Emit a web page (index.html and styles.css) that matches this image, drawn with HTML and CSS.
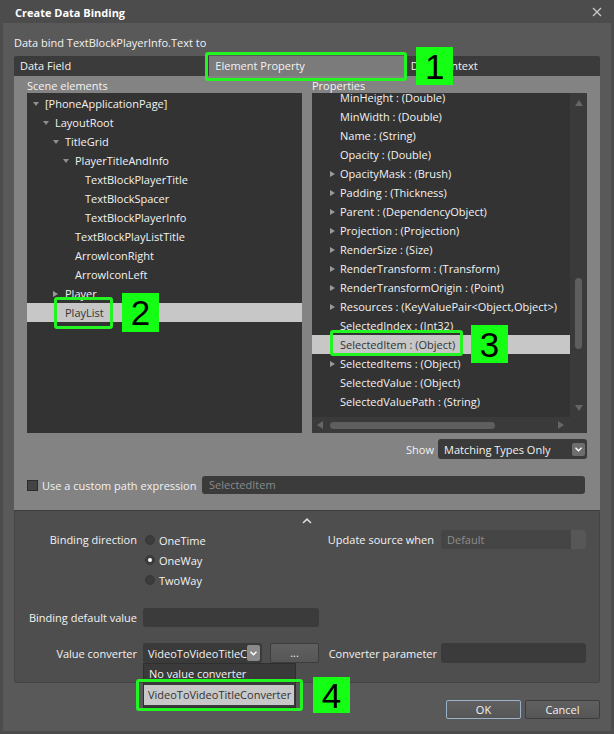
FILE: index.html
```html
<!DOCTYPE html>
<html>
  <head>
    <link rel="stylesheet" href="styles.css">
  </head>
  <body>
    <div class="dialog">
      <div class="titlebar">
        <span class="title">Create Data Binding</span>
        <svg class="close" width="10" height="10" viewBox="0 0 10 10">
          <path d="M1 1 L9 9 M9 1 L1 9" stroke="#c9c9c9" stroke-width="1.3" fill="none" />
        </svg>
      </div>

      <div class="content">
        <div class="prompt">Data bind TextBlockPlayerInfo.Text to</div>

        <div class="tabs">
          <div class="tab">Data Field</div>
          <div class="tab active">
            Element Property
            <span class="mark mark-tab"></span>
            <span class="badge badge-tab">1</span>
          </div>
          <div class="tab">Data Context</div>
        </div>

        <div class="panel">
          <div class="columns">
            <div class="column">
              <div class="col-label">Scene elements</div>
              <div class="tree">
                <div class="row l0"><span class="arrow open"></span>[PhoneApplicationPage]</div>
                <div class="row l1"><span class="arrow open"></span>LayoutRoot</div>
                <div class="row l2"><span class="arrow open"></span>TitleGrid</div>
                <div class="row l3"><span class="arrow open"></span>PlayerTitleAndInfo</div>
                <div class="row l4"><span class="arrow"></span>TextBlockPlayerTitle</div>
                <div class="row l4"><span class="arrow"></span>TextBlockSpacer</div>
                <div class="row l4"><span class="arrow"></span>TextBlockPlayerInfo</div>
                <div class="row l3"><span class="arrow"></span>TextBlockPlayListTitle</div>
                <div class="row l3"><span class="arrow"></span>ArrowIconRight</div>
                <div class="row l3"><span class="arrow"></span>ArrowIconLeft</div>
                <div class="row l2"><span class="arrow closed"></span>Player</div>
                <div class="row l2 selected">
                  <span class="arrow"></span>PlayList
                  <span class="mark mark-tree"></span>
                  <span class="badge badge-tree">2</span>
                </div>
              </div>
            </div>

            <div class="column">
              <div class="col-label">Properties</div>
              <div class="props">
                <div class="props-view">
                  <div class="props-inner">
                    <div class="row prop"><span class="arrow"></span>MinHeight : (Double)</div>
                    <div class="row prop"><span class="arrow"></span>MinWidth : (Double)</div>
                    <div class="row prop"><span class="arrow"></span>Name : (String)</div>
                    <div class="row prop"><span class="arrow"></span>Opacity : (Double)</div>
                    <div class="row prop"><span class="arrow closed"></span>OpacityMask : (Brush)</div>
                    <div class="row prop"><span class="arrow closed"></span>Padding : (Thickness)</div>
                    <div class="row prop"><span class="arrow closed"></span>Parent : (DependencyObject)</div>
                    <div class="row prop"><span class="arrow closed"></span>Projection : (Projection)</div>
                    <div class="row prop"><span class="arrow closed"></span>RenderSize : (Size)</div>
                    <div class="row prop"><span class="arrow closed"></span>RenderTransform : (Transform)</div>
                    <div class="row prop"><span class="arrow closed"></span>RenderTransformOrigin : (Point)</div>
                    <div class="row prop"><span class="arrow closed"></span>Resources : (KeyValuePair&lt;Object,Object&gt;)</div>
                    <div class="row prop"><span class="arrow"></span>SelectedIndex : (Int32)</div>
                    <div class="row prop selected">
                      <span class="arrow"></span>SelectedItem : (Object)
                      <span class="mark mark-prop"></span>
                      <span class="badge badge-prop">3</span>
                    </div>
                    <div class="row prop"><span class="arrow closed"></span>SelectedItems : (Object)</div>
                    <div class="row prop"><span class="arrow"></span>SelectedValue : (Object)</div>
                    <div class="row prop"><span class="arrow"></span>SelectedValuePath : (String)</div>
                    <div class="row prop"><span class="arrow"></span>SelectionMode : (SelectionMode)</div>
                  </div>
                </div>
                <div class="vscroll">
                  <span class="sarrow up"></span>
                  <div class="vtrack"><div class="vthumb"></div></div>
                  <span class="sarrow down"></span>
                </div>
                <div class="hscroll">
                  <span class="sarrow left"></span>
                  <div class="hthumb"></div>
                  <span class="sarrow right"></span>
                </div>
                <div class="corner"></div>
              </div>
            </div>
          </div>

          <div class="show-row">
            <span class="label">Show</span>
            <div class="select show-select">
              <span class="select-text">Matching Types Only</span>
              <span class="select-btn">
                <svg width="7" height="5" viewBox="0 0 7 5"><path d="M0.5 0.8 L3.5 3.8 L6.5 0.8" stroke="#fff" stroke-width="1.4" fill="none" /></svg>
              </span>
            </div>
          </div>

          <div class="path-row">
            <span class="checkbox"></span>
            <span class="label">Use a custom path expression</span>
            <div class="textbox path-box">SelectedItem</div>
          </div>
        </div>

        <div class="advanced">
          <div class="collapse">
            <svg width="10" height="6" viewBox="0 0 10 6"><path d="M1 5 L5 1.2 L9 5" stroke="#dcdcdc" stroke-width="1.6" fill="none" /></svg>
          </div>

          <div class="field-row direction-row">
            <span class="flabel">Binding direction</span>
            <div class="radios">
              <div class="radio-item"><span class="radio"></span>OneTime</div>
              <div class="radio-item"><span class="radio checked"></span>OneWay</div>
              <div class="radio-item"><span class="radio"></span>TwoWay</div>
            </div>
            <span class="flabel">Update source when</span>
            <div class="select default-select">
              <span class="select-text muted">Default</span>
              <span class="select-side"></span>
            </div>
          </div>

          <div class="field-row default-row">
            <span class="flabel">Binding default value</span>
            <div class="textbox"></div>
          </div>

          <div class="field-row converter-row">
            <span class="flabel">Value converter</span>
            <div class="converter">
              <div class="select conv-select">
                <span class="select-text clip">VideoToVideoTitleConverter</span>
                <span class="select-btn light">
                  <svg width="7" height="5" viewBox="0 0 7 5"><path d="M0.5 0.8 L3.5 3.8 L6.5 0.8" stroke="#fff" stroke-width="1.4" fill="none" /></svg>
                </span>
                <div class="popup">
                  <div class="popup-item">No value converter</div>
                  <div class="popup-item selected">
                    VideoToVideoTitleConverter
                    <span class="mark mark-popup"></span>
                    <span class="badge badge-popup">4</span>
                  </div>
                </div>
              </div>
              <div class="button dots">...</div>
            </div>
            <span class="flabel">Converter parameter</span>
            <div class="textbox"></div>
          </div>
        </div>

        <div class="actions">
          <div class="button action default">OK</div>
          <div class="button action">Cancel</div>
        </div>
      </div>
    </div>
  </body>
</html>
```

FILE: styles.css
```css
body {
  margin: 0;
  background-color: #4c4c4c;
  font-family: "Open Sans", "Noto Sans", sans-serif;
  font-size: 11px;
  color: #f2f2f2;
}

.dialog {
  width: 614px;
  height: 734px;
  background-color: #4c4c4c;
}

.titlebar {
  height: 23px;
  display: flex;
  align-items: center;
  justify-content: space-between;
  padding: 1px 12px 0 15px;
  box-sizing: border-box;
}

.title {
  font-weight: bold;
  font-size: 11px;
  color: #fff;
}

.content {
  margin: 0 3px;
  height: 708px;
  padding: 0 11px;
  background-color: #595959;
  box-sizing: border-box;
}

.prompt {
  padding-top: 12px;
  line-height: 16px;
  margin-bottom: 5px;
}

/* tab strip */

.tabs {
  display: flex;
  height: 20px;
  background-color: #3b3b3b;
  border-radius: 2px 2px 0 0;
}

.tab {
  flex: 1;
  padding-left: 6px;
  line-height: 20px;
  position: relative;
}

.tab.active {
  background-color: #7b7b7b;
}

/* green callouts */

.mark {
  position: absolute;
  border: 3px solid #22f522;
  border-radius: 3px;
  box-sizing: border-box;
}

.badge {
  position: absolute;
  background-color: #14ff14;
  color: #000;
  font-family: "Liberation Sans", Arial, sans-serif;
  font-size: 35px;
  text-align: center;
  z-index: 2;
}

.mark-tab {
  left: -4px;
  top: -4px;
  width: 202px;
  height: 29px;
}

.badge-tab {
  left: 207px;
  top: -9px;
  width: 37px;
  height: 38px;
  line-height: 39px;
}

.mark-tree {
  left: 27px;
  top: -6px;
  width: 59px;
  height: 32px;
}

.badge-tree {
  left: 95px;
  top: -10px;
  width: 37px;
  height: 39px;
  line-height: 40px;
}

.mark-prop {
  left: 18px;
  top: -5px;
  width: 133px;
  height: 26px;
}

.badge-prop {
  left: 159px;
  top: -10px;
  width: 37px;
  height: 38px;
  line-height: 39px;
}

.mark-popup {
  left: -8px;
  top: -6px;
  width: 167px;
  height: 32px;
}

.badge-popup {
  left: 169px;
  top: -8px;
  width: 37px;
  height: 36px;
  line-height: 37px;
}

/* upper panel */

.panel {
  height: 434px;
  padding: 2px 13px 0;
  background-color: #838383;
  box-sizing: border-box;
}

.columns {
  display: grid;
  grid-template-columns: 275px 275px;
  column-gap: 10px;
}

.col-label {
  line-height: 15px;
  color: #f4f4f4;
}

.tree,
.props {
  height: 340px;
  background-color: #333;
  overflow: hidden;
}

.tree {
  padding-top: 1px;
  box-sizing: border-box;
}

.row {
  height: 19px;
  line-height: 19px;
  display: flex;
  align-items: center;
  position: relative;
  white-space: nowrap;
}

.row.selected {
  background-color: #c7c7c7;
  color: #333;
}

.l0 { padding-left: 6px; }
.l1 { padding-left: 16px; }
.l2 { padding-left: 26px; }
.l3 { padding-left: 36px; }
.l4 { padding-left: 46px; }

.arrow {
  width: 12px;
  height: 19px;
  flex: none;
  position: relative;
}

.prop {
  padding-left: 18px;
}

.prop .arrow {
  width: 10px;
}

.arrow.open::before {
  content: "";
  position: absolute;
  left: 0;
  top: 8px;
  border-left: 3px solid transparent;
  border-right: 3px solid transparent;
  border-top: 4px solid #8e8e8e;
}

.arrow.closed::before {
  content: "";
  position: absolute;
  left: 0;
  top: 7px;
  border-top: 3px solid transparent;
  border-bottom: 3px solid transparent;
  border-left: 5px solid #9a9a9a;
}

.props {
  display: grid;
  grid-template-columns: 1fr 17px;
  grid-template-rows: 1fr 16px;
}

.props-view {
  overflow: hidden;
}

.props-inner {
  margin-top: -5px;
}

.vscroll,
.hscroll,
.corner {
  background-color: #3a3a3a;
}

.vscroll {
  display: flex;
  flex-direction: column;
  align-items: center;
}

.vtrack {
  flex: 1;
  width: 7px;
}

.vthumb {
  margin-top: 165px;
  height: 71px;
  background-color: #5e5e5e;
  border-radius: 4px;
}

.hscroll {
  display: flex;
  align-items: center;
}

.hthumb {
  width: 165px;
  height: 7px;
  margin-left: 2px;
  margin-right: auto;
  background-color: #5e5e5e;
  border-radius: 4px;
}

.sarrow {
  width: 16px;
  height: 20px;
  position: relative;
  flex: none;
}

.sarrow::before {
  content: "";
  position: absolute;
}

.sarrow.up::before {
  left: 4px;
  top: 7px;
  border-left: 4px solid transparent;
  border-right: 4px solid transparent;
  border-bottom: 6px solid #666;
}

.sarrow.down {
  height: 18px;
}

.sarrow.down::before {
  left: 4px;
  top: 6px;
  border-left: 4px solid transparent;
  border-right: 4px solid transparent;
  border-top: 6px solid #666;
}

.sarrow.left,
.sarrow.right {
  height: 16px;
}

.sarrow.left::before {
  left: 5px;
  top: 4px;
  border-top: 4px solid transparent;
  border-bottom: 4px solid transparent;
  border-right: 6px solid #666;
}

.sarrow.right::before {
  left: 4px;
  top: 4px;
  border-top: 4px solid transparent;
  border-bottom: 4px solid transparent;
  border-left: 6px solid #666;
}

/* selects, boxes */

.select {
  display: flex;
  align-items: center;
  background-color: #3a3a3a;
  border-radius: 3px;
  position: relative;
  box-sizing: border-box;
}

.select-text {
  flex: 1;
  padding-left: 6px;
  white-space: nowrap;
  overflow: hidden;
}

.select-text.muted {
  color: #8d8d8d;
}

.select-btn {
  width: 13px;
  height: 13px;
  margin-right: 2px;
  border-radius: 2px;
  background-color: #6e6e6e;
  display: flex;
  align-items: center;
  justify-content: center;
}

.select-btn.light {
  background-color: #8a8a8a;
  height: 16px;
}

.show-row {
  display: flex;
  justify-content: flex-end;
  align-items: center;
  margin-top: 6px;
  height: 20px;
}

.show-select {
  width: 149px;
  height: 20px;
  margin-left: 4px;
}

.path-row {
  display: flex;
  align-items: center;
  margin-top: 17px;
  height: 18px;
}

.checkbox {
  width: 11px;
  height: 11px;
  border: 1px solid #2c2c2c;
  background-color: #444;
  box-sizing: border-box;
  margin-right: 4px;
}

.textbox {
  height: 19px;
  background-color: #3b3b3b;
  border-radius: 3px;
  box-sizing: border-box;
}

.path-box {
  width: 383px;
  height: 18px;
  margin-left: auto;
  margin-right: 2px;
  padding-left: 7px;
  line-height: 18px;
  color: #8a8a8a;
}

/* lower panel */

.advanced {
  height: 173px;
  border: 1px solid #444;
  border-top-color: #3c3c3c;
  border-radius: 0 0 3px 3px;
  background-color: #4e4e4e;
  box-sizing: border-box;
}

.collapse {
  height: 19px;
  display: flex;
  justify-content: center;
  align-items: center;
}

.field-row {
  display: grid;
  grid-template-columns: 128px 176px 122px 145px;
  align-items: center;
}

.flabel {
  text-align: right;
  white-space: nowrap;
}

.field-row .flabel:first-child {
  padding-right: 6px;
}

.field-row > :nth-child(3) {
  padding-right: 4px;
}

.direction-row {
  align-items: start;
}

.direction-row .flabel {
  line-height: 20px;
}

.direction-row .flabel:nth-child(3) {
  line-height: 19px;
  padding-right: 7px;
}

.radio-item {
  height: 20px;
  display: flex;
  align-items: center;
  padding-left: 2px;
}

.radio {
  width: 10px;
  height: 10px;
  border-radius: 50%;
  background-color: #3c3c3c;
  border: 1px solid #363636;
  box-sizing: border-box;
  margin-right: 4px;
  position: relative;
}

.radio.checked::after {
  content: "";
  position: absolute;
  left: 2px;
  top: 2px;
  width: 4px;
  height: 4px;
  border-radius: 50%;
  background-color: #fff;
}

.default-select {
  height: 19px;
  background-color: #454545;
}

.select-side {
  width: 15px;
  height: 19px;
  border-radius: 0 3px 3px 0;
  background-color: #575757;
}

.default-row {
  margin-top: 18px;
}

.converter-row {
  margin-top: 16px;
}

.converter-row .textbox {
  height: 20px;
}

.converter {
  display: flex;
  gap: 8px;
}

.conv-select {
  width: 119px;
  height: 20px;
}

.select-text.clip {
  padding-left: 5px;
  text-overflow: clip;
}

.button {
  background: linear-gradient(#606060, #565656);
  border: 1px solid #3c3c3c;
  border-radius: 2px;
  box-sizing: border-box;
  text-align: center;
}

.dots {
  width: 49px;
  height: 20px;
  line-height: 17px;
}

.popup {
  position: absolute;
  left: 0;
  top: 20px;
  width: 153px;
  height: 45px;
  background-color: #3a3a3a;
  border: 1px solid #2f2f2f;
  box-sizing: border-box;
  z-index: 3;
}

.popup-item {
  height: 19px;
  line-height: 19px;
  padding-left: 5px;
  white-space: nowrap;
  position: relative;
}

.popup-item.selected {
  height: 20px;
  line-height: 20px;
  margin: 2px 1px 0 0;
  padding-left: 4px;
  background-color: #c8c8c8;
  color: #333;
}

.actions {
  display: flex;
  justify-content: flex-end;
  gap: 4px;
  margin-top: 17px;
}

.action {
  width: 75px;
  height: 19px;
  line-height: 17px;
}

.action.default {
  border-color: #9cb2ca;
}
```
